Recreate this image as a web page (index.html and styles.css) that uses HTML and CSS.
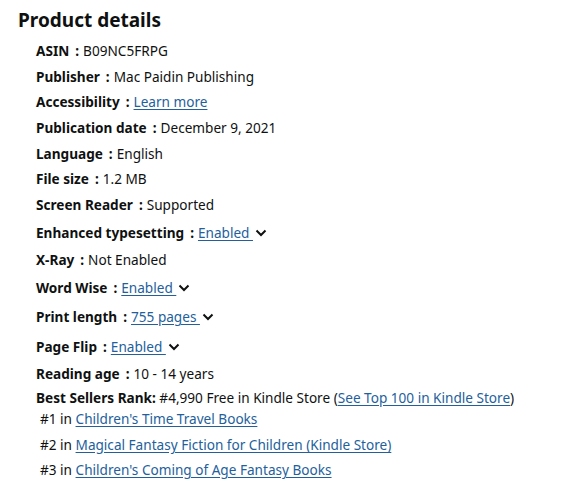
FILE: index.html
```html
<!DOCTYPE html>
<html>
<head>
<meta charset="utf-8">
<link rel="stylesheet" href="styles.css">
</head>
<body>
<div class="details">
  <h2 class="title">Product details</h2>
  <ul class="list">
    <li class="row"><span class="label">ASIN</span><span class="sep">:</span><span>B09NC5FRPG</span></li>
    <li class="row"><span class="label">Publisher</span><span class="sep">:</span><span>Mac Paidin Publishing</span></li>
    <li class="row"><span class="label">Accessibility</span><span class="sep">:</span><a class="link" href="#">Learn more</a></li>
    <li class="row"><span class="label">Publication date</span><span class="sep">:</span><span>December 9, 2021</span></li>
    <li class="row"><span class="label">Language</span><span class="sep">:</span><span>English</span></li>
    <li class="row"><span class="label">File size</span><span class="sep">:</span><span>1.2 MB</span></li>
    <li class="row"><span class="label">Screen Reader</span><span class="sep">:</span><span>Supported</span></li>
    <li class="row dd"><span class="label">Enhanced typesetting</span><span class="sep">:</span><a class="link" href="#">Enabled </a><svg class="chev" viewBox="0 0 12 8"><path d="M1.5 1.5 L6 6 L10.5 1.5" /></svg></li>
    <li class="row"><span class="label">X-Ray</span><span class="sep">:</span><span>Not Enabled</span></li>
    <li class="row dd"><span class="label">Word Wise</span><span class="sep">:</span><a class="link" href="#">Enabled </a><svg class="chev" viewBox="0 0 12 8"><path d="M1.5 1.5 L6 6 L10.5 1.5" /></svg></li>
    <li class="row dd"><span class="label">Print length</span><span class="sep">:</span><a class="link" href="#">755 pages </a><svg class="chev" viewBox="0 0 12 8"><path d="M1.5 1.5 L6 6 L10.5 1.5" /></svg></li>
    <li class="row dd"><span class="label">Page Flip</span><span class="sep">:</span><a class="link" href="#">Enabled </a><svg class="chev" viewBox="0 0 12 8"><path d="M1.5 1.5 L6 6 L10.5 1.5" /></svg></li>
    <li class="row"><span class="label">Reading age</span><span class="sep">:</span><span>10 - 14 years</span></li>
    <li class="rank">
      <div class="rank-head"><span class="label-r">Best Sellers Rank:</span> #4,990 Free in Kindle Store (<a class="link" href="#">See Top 100 in Kindle Store</a>)</div>
      <ul class="sub">
        <li class="sub-row">#1 in <a class="link" href="#">Children's Time Travel Books</a></li>
        <li class="sub-row">#2 in <a class="link" href="#">Magical Fantasy Fiction for Children (Kindle Store)</a></li>
        <li class="sub-row">#3 in <a class="link" href="#">Children's Coming of Age Fantasy Books</a></li>
      </ul>
    </li>
  </ul>
</div>
</body>
</html>
```

FILE: styles.css
```css
html, body {
  margin: 0;
  padding: 0;
  background: #ffffff;
}
body {
  font-family: "Noto Sans", "Open Sans", sans-serif;
  color: #0f1111;
  font-size: 13.6px;
}
.details {
  padding: 6px 0 0 18px;
}
.title {
  margin: 0;
  font-size: 19px;
  font-weight: 700;
  line-height: 29px;
}
.list {
  list-style: none;
  margin: 3px 0 0 0;
  padding: 0 0 0 18px;
}
.row {
  display: flex;
  align-items: center;
  height: 25.7px;
  line-height: 20px;
}
.row.dd {
  height: 29.5px;
}
.label {
  font-weight: 700;
}
.sep {
  font-weight: 700;
  margin: 0 4px 0 6px;
}
.link {
  color: #245f9c;
  text-decoration: underline;
  text-underline-offset: 2px;
  white-space: pre;
}
.chev {
  width: 12px;
  height: 8px;
  margin-left: 2px;
  fill: none;
  stroke: #0f1111;
  stroke-width: 2;
}
.rank-head {
  line-height: 22px;
}
.label-r {
  font-weight: 700;
}
.sub {
  list-style: none;
  margin: 0;
  padding: 0 0 0 4px;
}
.sub-row {
  line-height: 20px;
  margin-bottom: 5.5px;
}
```
